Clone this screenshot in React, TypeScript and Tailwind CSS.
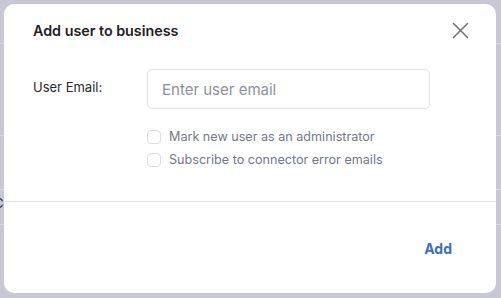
import React, { useState } from "react";

export default function App() {
  const [email, setEmail] = useState("");
  const [isAdmin, setIsAdmin] = useState(false);
  const [subscribe, setSubscribe] = useState(false);

  return (
    <div className="relative w-[501px] h-[298px] overflow-hidden bg-[#c7c8d4] font-['Inter',sans-serif]">
      {/* page behind the overlay */}
      <div className="absolute inset-0 flex flex-col">
        <div className="h-[44px] border-b border-[#d9dae2]" />
        <div className="h-[92px] border-b border-[#d9dae2]" />
        <div className="h-[54px] border-b border-[#d9dae2]" />
        <div className="h-[35px] border-b border-[#d9dae2] text-[13px] leading-none text-[#2c2a5c] pt-[7px] -ml-[6px]">Co</div>
      </div>

      {/* dialog */}
      <div className="absolute left-[4px] top-[4px] w-[492px] h-[289px] bg-white rounded-[10px] flex flex-col">
        <div className="flex items-center justify-between pl-[29px] pr-[27px] pt-[9px] h-[44px]">
          <h2 className="text-[14.3px] font-semibold text-[#1f2024]">Add user to business</h2>
          <button className="text-[#707070]">
            <svg width="17" height="17" viewBox="0 0 17 17" fill="none" stroke="currentColor" strokeWidth="1.5" strokeLinecap="round">
              <path d="M1.5 1.5L15.5 15.5M15.5 1.5L1.5 15.5" />
            </svg>
          </button>
        </div>

        <div className="flex pl-[29px] pt-[21px]">
          <label className="w-[114px] text-[13px] text-[#2a2a2e] pt-[9px]">User Email:</label>
          <div className="flex flex-col">
            <input
              value={email}
              onChange={(e) => setEmail(e.target.value)}
              placeholder="Enter user email"
              className="w-[283px] h-[40px] rounded-[5px] border border-[#e2e3e8] px-[14px] text-[15px] text-gray-800 placeholder:text-[#8d9099] outline-none"
            />
            <div className="flex flex-col gap-[9px] pt-[21px]">
              <label className="flex items-center gap-[8px] text-[12.6px] text-[#737887] h-[14px]">
                <input
                  type="checkbox"
                  checked={isAdmin}
                  onChange={(e) => setIsAdmin(e.target.checked)}
                  className="appearance-none w-[14px] h-[14px] rounded-[4px] border border-[#dcdde3] bg-white"
                />
                Mark new user as an administrator
              </label>
              <label className="flex items-center gap-[8px] text-[12.6px] text-[#737887] h-[14px]">
                <input
                  type="checkbox"
                  checked={subscribe}
                  onChange={(e) => setSubscribe(e.target.checked)}
                  className="appearance-none w-[14px] h-[14px] rounded-[4px] border border-[#dcdde3] bg-white"
                />
                Subscribe to connector error emails
              </label>
            </div>
          </div>
        </div>

        <div className="mt-[34px] border-t border-[#e4e5ea]" />

        <div className="flex justify-end pr-[44px] pt-[36px]">
          <button className="text-[14px] font-bold text-[#3a6fca]">Add</button>
        </div>
      </div>
    </div>
  );
}
